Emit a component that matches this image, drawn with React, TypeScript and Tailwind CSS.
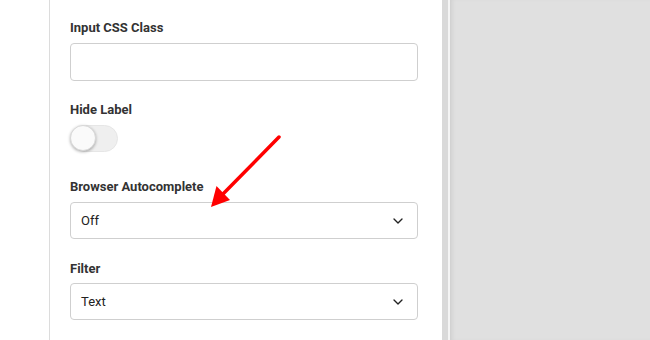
import { ChevronDown } from "lucide-react";

const Label = ({ children }: { children: string }) => (
  <label className="block text-[13px] font-bold leading-4 text-[#333]">{children}</label>
);

const SelectBox = ({ value }: { value: string }) => (
  <div className="flex h-[37px] w-[348px] items-center justify-between rounded-[4px] border border-[#cfcfcf] bg-white pl-[10px] pr-[11px]">
    <span className="text-[13px] text-[#222]">{value}</span>
    <ChevronDown size={16} strokeWidth={2} className="text-[#222]" />
  </div>
);

export default function App() {
  return (
    <div className="relative flex h-[340px] w-[650px] overflow-hidden bg-white font-['Roboto',_'Liberation_Sans',_sans-serif]">
      <div className="w-[49px] shrink-0 bg-white" />
      <div className="w-px shrink-0 bg-[#dcdcdc]" />
      <div className="w-[392px] shrink-0 bg-white pl-[20px] pt-[20px]">
        <Label>Input CSS Class</Label>
        <div className="mt-[7px] h-[38px] w-[348px] rounded-[4px] border border-[#cfcfcf] bg-white" />

        <div className="mt-[21px]">
          <Label>Hide Label</Label>
        </div>
        <div className="relative mt-[7px] h-[27px] w-[48px]">
          <div className="absolute left-[2px] top-0 h-[27px] w-[46px] rounded-full border border-[#e6e6e6] bg-[#efefef]" />
          <div className="absolute left-0 top-0 h-[26px] w-[26px] rounded-full border border-[#d8d8d8] bg-[#fafafa] shadow-[0_1px_3px_rgba(0,0,0,0.3)]" />
        </div>

        <div className="mt-[27px]">
          <Label>Browser Autocomplete</Label>
        </div>
        <div className="mt-[7px]">
          <SelectBox value="Off" />
        </div>

        <div className="mt-[22px]">
          <Label>Filter</Label>
        </div>
        <div className="mt-[6px]">
          <SelectBox value="Text" />
        </div>
      </div>
      <div className="w-[6px] shrink-0 bg-[#d9d9d9]" />
      <div className="w-[2px] shrink-0 bg-[#f4f4f4]" />
      <div className="flex-1 bg-[#e0e0e0] shadow-[inset_4px_0_4px_-2px_rgba(0,0,0,0.08)]" />

      <svg className="absolute left-0 top-0" width="650" height="340" viewBox="0 0 650 340">
        <line x1="279" y1="137" x2="222" y2="195" stroke="#ff0000" strokeWidth="3.5" strokeLinecap="round" />
        <polygon points="211,207 216.5,186 230,200" fill="#ff0000" />
      </svg>
    </div>
  );
}
